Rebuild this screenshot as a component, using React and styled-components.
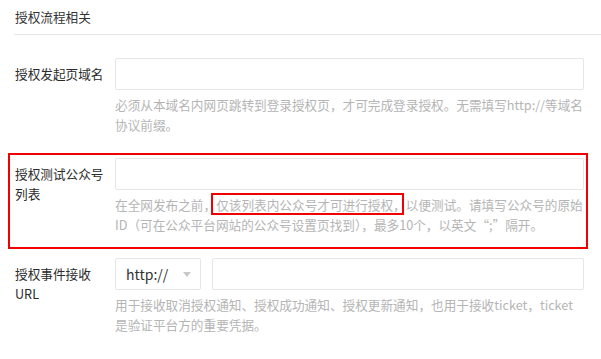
import React from "react";
import styled, { createGlobalStyle } from "styled-components";

const GlobalStyle = createGlobalStyle`
  html, body {
    margin: 0;
    padding: 0;
    background: #fff;
  }
  body {
    font-family: "Noto Sans CJK SC", "Noto Sans", sans-serif;
    font-size: 12.65px;
    color: #333;
  }
`;

const Page = styled.div`
  padding: 0 17px 0 15px;
  width: 601px;
  box-sizing: border-box;
`;

const Title = styled.div`
  height: 34px;
  line-height: 34px;
  margin-left: -1px;
  margin-right: -17px;
  padding-left: 1px;
  border-bottom: 1px solid #e7e7e7;
  font-size: 12.65px;
  color: #333;
`;

const Row = styled.div`
  position: relative;
  display: flex;
  margin-top: 23px;

  ${(p) =>
    p.$marked &&
    `
    &::after {
      content: "";
      position: absolute;
      top: -5px;
      left: -7px;
      right: -4px;
      bottom: -14px;
      border: 2px solid #f00000;
      pointer-events: none;
    }
  `}
`;

const Label = styled.div`
  width: 100px;
  flex: none;
  padding-top: 6px;
  padding-right: 8px;
  box-sizing: border-box;
  line-height: 20px;
  font-size: 12.65px;
  color: #2b2b2b;
`;

const Field = styled.div`
  flex: 1;
  min-width: 0;
`;

const Controls = styled.div`
  display: flex;
  gap: 11px;
`;

const Input = styled.div`
  flex: 1;
  height: 32px;
  border: 1px solid #e6e6e6;
  border-radius: 2px;
  box-sizing: border-box;
  background: #fff;
`;

const Select = styled.div`
  width: 86px;
  flex: none;
  height: 32px;
  border: 1px solid #e6e6e6;
  border-radius: 2px;
  box-sizing: border-box;
  display: flex;
  align-items: center;
  justify-content: space-between;
  padding: 0 9px 0 10px;
  font-size: 14px;
  color: #333;
`;

const Caret = styled.span`
  width: 0;
  height: 0;
  border-left: 4px solid transparent;
  border-right: 4px solid transparent;
  border-top: 5px solid #c8c8c8;
`;

const Help = styled.div`
  margin-top: 5px;
  line-height: 20px;
  font-size: 12.65px;
  color: #b5b5b5;
  white-space: nowrap;
`;

const Marked = styled.span`
  position: relative;

  &::after {
    content: "";
    position: absolute;
    top: -2px;
    left: -5px;
    right: 2px;
    height: 22px;
    border: 2px solid #f00000;
    box-sizing: border-box;
    pointer-events: none;
  }
`;

export default function App() {
  return (
    <>
      <GlobalStyle />
      <Page>
        <Title>授权流程相关</Title>

        <Row>
          <Label>授权发起页域名</Label>
          <Field>
            <Controls>
              <Input />
            </Controls>
            <Help>
              必须从本域名内网页跳转到登录授权页，才可完成登录授权。无需填写http://等域名
              <br />
              协议前缀。
            </Help>
          </Field>
        </Row>

        <Row $marked>
          <Label>授权测试公众号列表</Label>
          <Field>
            <Controls>
              <Input />
            </Controls>
            <Help>
              在全网发布之前，<Marked>仅该列表内公众号才可进行授权，</Marked>以便测试。请填写公众号的原始
              <br />
              ID（可在公众平台网站的公众号设置页找到），最多10个，以英文“;”隔开。
            </Help>
          </Field>
        </Row>

        <Row>
          <Label>授权事件接收URL</Label>
          <Field>
            <Controls>
              <Select>
                <span>http://</span>
                <Caret />
              </Select>
              <Input />
            </Controls>
            <Help>
              用于接收取消授权通知、授权成功通知、授权更新通知，也用于接收ticket，ticket
              <br />
              是验证平台方的重要凭据。
            </Help>
          </Field>
        </Row>
      </Page>
    </>
  );
}
